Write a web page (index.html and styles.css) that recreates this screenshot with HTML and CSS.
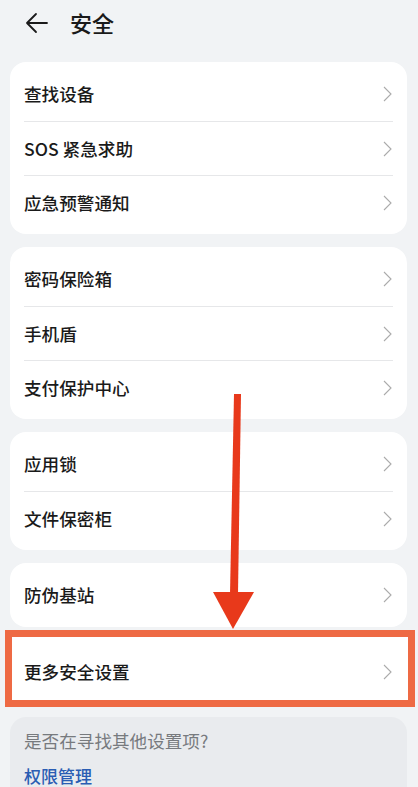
FILE: index.html
```html
<!DOCTYPE html>
<html lang="zh-CN">
<head>
<meta charset="utf-8">
<title>安全</title>
<link rel="stylesheet" href="styles.css">
</head>
<body>
<div class="page">
  <header class="header">
    <svg class="back" width="26" height="24" viewBox="0 0 26 24">
      <path d="M23 12H3M12 3L3 12L12 21" fill="none" stroke="#1a1a1a" stroke-width="1.8" stroke-linecap="round" stroke-linejoin="round"/>
    </svg>
    <h1 class="title">安全</h1>
  </header>

  <section class="card">
    <div class="row"><span class="label">查找设备</span><svg class="chev" width="9" height="16" viewBox="0 0 9 16"><path d="M1 1L8 8L1 15" fill="none" stroke="#ababab" stroke-width="1.1"/></svg></div>
    <div class="row"><span class="label">SOS 紧急求助</span><svg class="chev" width="9" height="16" viewBox="0 0 9 16"><path d="M1 1L8 8L1 15" fill="none" stroke="#ababab" stroke-width="1.1"/></svg></div>
    <div class="row"><span class="label">应急预警通知</span><svg class="chev" width="9" height="16" viewBox="0 0 9 16"><path d="M1 1L8 8L1 15" fill="none" stroke="#ababab" stroke-width="1.1"/></svg></div>
  </section>

  <section class="card">
    <div class="row"><span class="label">密码保险箱</span><svg class="chev" width="9" height="16" viewBox="0 0 9 16"><path d="M1 1L8 8L1 15" fill="none" stroke="#ababab" stroke-width="1.1"/></svg></div>
    <div class="row"><span class="label">手机盾</span><svg class="chev" width="9" height="16" viewBox="0 0 9 16"><path d="M1 1L8 8L1 15" fill="none" stroke="#ababab" stroke-width="1.1"/></svg></div>
    <div class="row"><span class="label">支付保护中心</span><svg class="chev" width="9" height="16" viewBox="0 0 9 16"><path d="M1 1L8 8L1 15" fill="none" stroke="#ababab" stroke-width="1.1"/></svg></div>
  </section>

  <section class="card">
    <div class="row"><span class="label">应用锁</span><svg class="chev" width="9" height="16" viewBox="0 0 9 16"><path d="M1 1L8 8L1 15" fill="none" stroke="#ababab" stroke-width="1.1"/></svg></div>
    <div class="row"><span class="label">文件保密柜</span><svg class="chev" width="9" height="16" viewBox="0 0 9 16"><path d="M1 1L8 8L1 15" fill="none" stroke="#ababab" stroke-width="1.1"/></svg></div>
  </section>

  <section class="card">
    <div class="row"><span class="label">防伪基站</span><svg class="chev" width="9" height="16" viewBox="0 0 9 16"><path d="M1 1L8 8L1 15" fill="none" stroke="#ababab" stroke-width="1.1"/></svg></div>
  </section>

  <section class="card card-highlight">
    <div class="highlight"></div>
    <div class="row"><span class="label">更多安全设置</span><svg class="chev" width="9" height="16" viewBox="0 0 9 16"><path d="M1 1L8 8L1 15" fill="none" stroke="#ababab" stroke-width="1.1"/></svg></div>
  </section>

  <section class="card card-hint">
    <p class="hint">是否在寻找其他设置项?</p>
    <a class="link">权限管理</a>
  </section>

  <svg class="arrow" width="418" height="787" viewBox="0 0 418 787">
    <polygon points="234,394 241,394 238,594 230,594" fill="#e8391b"/>
    <polygon points="213,592 254,592 233,629" fill="#e8391b"/>
  </svg>
</div>
</body>
</html>
```

FILE: styles.css
```css
* { box-sizing: border-box; }

html, body {
  margin: 0;
  padding: 0;
}

body {
  background: #f1f3f5;
  font-family: "Noto Sans CJK SC", "Noto Sans", sans-serif;
  color: #1a1a1a;
  width: 418px;
  height: 787px;
  overflow: hidden;
}

.page {
  position: relative;
  display: flex;
  flex-direction: column;
  gap: 13px;
  padding: 0 11px 0 10px;
}

.header {
  height: 49px;
  display: flex;
  align-items: center;
  padding-left: 14px;
  gap: 20px;
}

.back {
  display: block;
  margin-top: -4px;
}

.title {
  margin: -6px 0 0 0;
  font-size: 22px;
  font-weight: 500;
  line-height: 1;
}

.card {
  background: #ffffff;
  border-radius: 16px;
  padding: 5px 0;
  display: flex;
  flex-direction: column;
}

.row {
  position: relative;
  height: 54px;
  display: flex;
  align-items: center;
  justify-content: space-between;
  margin: 0 14px;
  padding-right: 1px;
}

.row + .row {
  border-top: 1px solid #e6e7e9;
}

.label {
  font-size: 17.6px;
  font-weight: 500;
  color: #1a1a1a;
  line-height: 1;
}

.chev {
  display: block;
  flex: none;
}

.card-highlight {
  position: relative;
}

.highlight {
  position: absolute;
  left: -5px;
  right: -8px;
  top: -10px;
  bottom: -3px;
  border: 7px solid #ee6a44;
  background: #ffffff;
}

.card-hint {
  background: #e9ebee;
  padding: 11px 14px 0;
  height: 90px;
}

.hint {
  margin: 0;
  font-size: 17.6px;
  color: #777a7e;
  line-height: 26px;
}

.link {
  display: block;
  margin-top: 11px;
  font-size: 17px;
  font-weight: 500;
  color: #2a5db3;
  line-height: 22px;
}

.arrow {
  position: absolute;
  left: 0;
  top: 0;
  pointer-events: none;
}
```
